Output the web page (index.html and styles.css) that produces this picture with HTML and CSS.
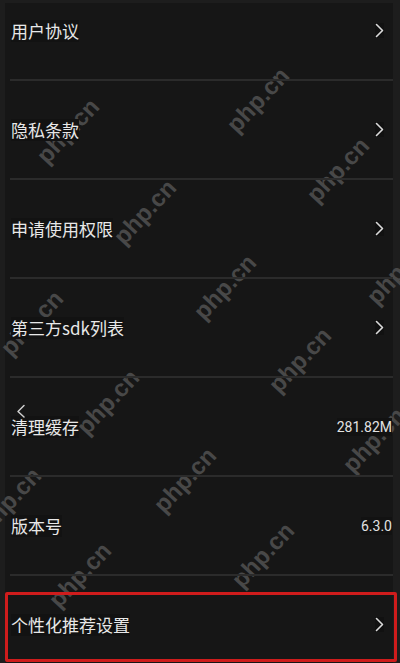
FILE: index.html
```html
<!DOCTYPE html>
<html lang="zh-CN">
<head>
<meta charset="utf-8">
<title>设置</title>
<link rel="stylesheet" href="styles.css">
</head>
<body>
<div class="screen">
  <div class="panel">
    <ul class="list">
      <li class="row"><span class="label">用户协议</span><svg class="chev" viewBox="0 0 9 15"><polyline points="1.5,1.5 7.5,7.5 1.5,13.5"/></svg></li>
      <li class="row"><span class="label">隐私条款</span><svg class="chev" viewBox="0 0 9 15"><polyline points="1.5,1.5 7.5,7.5 1.5,13.5"/></svg></li>
      <li class="row"><span class="label">申请使用权限</span><svg class="chev" viewBox="0 0 9 15"><polyline points="1.5,1.5 7.5,7.5 1.5,13.5"/></svg></li>
      <li class="row"><span class="label">第三方sdk列表</span><svg class="chev" viewBox="0 0 9 15"><polyline points="1.5,1.5 7.5,7.5 1.5,13.5"/></svg></li>
      <li class="row"><span class="label">清理缓存</span><span class="value">281.82M</span></li>
      <li class="row"><span class="label">版本号</span><span class="value">6.3.0</span></li>
      <li class="row row-last"><span class="label">个性化推荐设置</span><svg class="chev" viewBox="0 0 9 15"><polyline points="1.5,1.5 7.5,7.5 1.5,13.5"/></svg></li>
    </ul>
  </div>

  <div class="marks" aria-hidden="true">
    <span class="mark" style="left:68px;top:131px">php.cn</span>
    <span class="mark" style="left:258px;top:100px">php.cn</span>
    <span class="mark" style="left:338px;top:170px">php.cn</span>
    <span class="mark" style="left:145px;top:212px">php.cn</span>
    <span class="mark" style="left:225px;top:287px">php.cn</span>
    <span class="mark" style="left:32px;top:323px">php.cn</span>
    <span class="mark" style="left:398px;top:272px">php.cn</span>
    <span class="mark" style="left:300px;top:360px">php.cn</span>
    <span class="mark" style="left:108px;top:402px">php.cn</span>
    <span class="mark" style="left:374px;top:440px">php.cn</span>
    <span class="mark" style="left:185px;top:480px">php.cn</span>
    <span class="mark" style="left:10px;top:500px">php.cn</span>
    <span class="mark" style="left:263px;top:555px">php.cn</span>
    <span class="mark" style="left:80px;top:575px">php.cn</span>
  </div>

  <div class="back"><svg viewBox="0 0 12 16"><polyline points="9,2.5 3,8.5 9,14"/></svg></div>
  <div class="highlight"></div>
</div>
</body>
</html>
```

FILE: styles.css
```css
html, body {
  margin: 0;
  padding: 0;
  background: #1d1d1d;
}

body {
  font-family: "Noto Sans CJK SC", "Noto Sans", Roboto, sans-serif;
  color: #e4e4e4;
}

.screen {
  position: relative;
  width: 400px;
  height: 663px;
  overflow: hidden;
}

.panel {
  margin: 3px 7px 0 5px;
  height: 660px;
  overflow: hidden;
  background: #161616;
}

.list {
  list-style: none;
  margin: -21px 0 0 0;
  padding: 0;
}

.row {
  position: relative;
  z-index: 2;
  display: flex;
  align-items: center;
  justify-content: space-between;
  height: 97px;
  margin-left: 5px;
  padding: 0 1px 0 1px;
  border-bottom: 2px solid #2b2b2b;
}

.row-last {
  border-bottom: none;
}

.label {
  font-size: 17px;
  line-height: 22px;
  background: #121212;
  color: #e8e8e8;
}

.value {
  font-family: Roboto, "Noto Sans", sans-serif;
  font-size: 14px;
  line-height: 18px;
  background: #121212;
  color: #e2e2e2;
}

.chev {
  width: 9px;
  height: 15px;
  margin-right: 8px;
  fill: none;
  stroke: #dadada;
  stroke-width: 1.6;
  stroke-linecap: round;
  stroke-linejoin: round;
  background: #111;
}

.marks {
  position: absolute;
  inset: 0;
  z-index: 1;
  pointer-events: none;
}

.mark {
  position: absolute;
  transform: translate(-50%, -50%) rotate(-47deg);
  font-family: "Liberation Sans", Arial, sans-serif;
  font-weight: bold;
  font-size: 24px;
  color: #484848;
  white-space: nowrap;
}

.back {
  position: absolute;
  left: 15px;
  top: 403px;
  z-index: 3;
  width: 12px;
  height: 16px;
}

.back svg {
  display: block;
  width: 12px;
  height: 16px;
  fill: none;
  stroke: #cfcfcf;
  stroke-width: 1.5;
  stroke-linecap: round;
  stroke-linejoin: round;
}

.highlight {
  position: absolute;
  left: 5px;
  top: 592px;
  width: 392px;
  height: 70px;
  box-sizing: border-box;
  border: 3px solid #cf1c1c;
  border-radius: 2px;
  z-index: 4;
}
```
